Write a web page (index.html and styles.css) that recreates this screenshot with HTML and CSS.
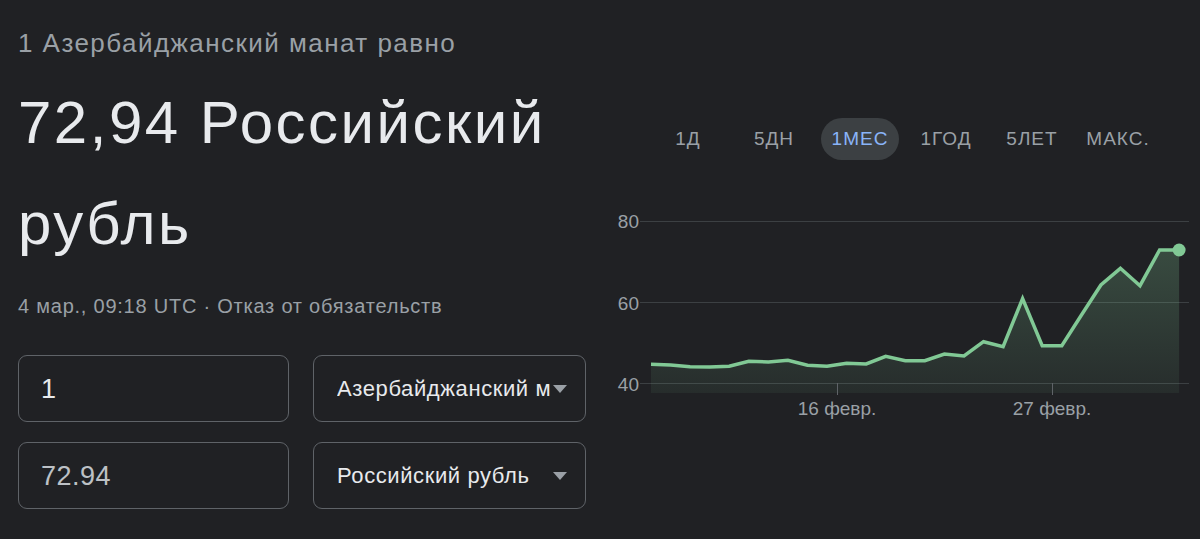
FILE: index.html
```html
<!DOCTYPE html>
<html lang="ru">
<head>
<meta charset="utf-8">
<title>Конвертер валют</title>
<link rel="stylesheet" href="styles.css">
</head>
<body>
<div class="panel">
  <section class="summary">
    <div class="subtitle">1 Азербайджанский манат равно</div>
    <div class="result">72,94 Российский рубль</div>
    <div class="meta">4 мар., 09:18 UTC · <span class="disclaimer">Отказ от обязательств</span></div>
    <div class="converter">
      <div class="field amount">1</div>
      <div class="field select"><span class="sel-text">Азербайджанский манат</span><span class="caret"></span></div>
      <div class="field amount dim">72.94</div>
      <div class="field select"><span class="sel-text">Российский рубль</span><span class="caret"></span></div>
    </div>
  </section>
  <section class="chart-area">
    <div class="tabs">
      <div class="tab">1Д</div>
      <div class="tab">5ДН</div>
      <div class="tab active">1МЕС</div>
      <div class="tab">1ГОД</div>
      <div class="tab">5ЛЕТ</div>
      <div class="tab">МАКС.</div>
    </div>
    <svg class="chart" width="614" height="270" viewBox="586 160 614 270" xmlns="http://www.w3.org/2000/svg">
      <defs>
        <linearGradient id="fillGrad" x1="0" y1="0" x2="0" y2="1">
          <stop offset="0" stop-color="#81c995" stop-opacity="0.25"/>
          <stop offset="1" stop-color="#81c995" stop-opacity="0.07"/>
        </linearGradient>
      </defs>
      <g class="grid">
        <line x1="640" y1="221.5" x2="1189" y2="221.5"/>
        <line x1="640" y1="302.5" x2="1189" y2="302.5"/>
        <line x1="640" y1="383.5" x2="1189" y2="383.5"/>
      </g>
      <g class="ylabels">
        <text x="639" y="228">80</text>
        <text x="639" y="309.5">60</text>
        <text x="639" y="390.5">40</text>
      </g>
      <polygon class="area" fill="url(#fillGrad)" points="651,393 651,364.3 670.6,365 690.1,366.7 709.7,367 729.2,366.3 748.8,361.3 768.4,362 787.9,360.3 807.5,365.3 827,366.3 846.6,363.3 866.2,364 885.7,356.3 905.3,360.7 924.8,360.7 944.4,354 964,356 983.5,341.7 1003.1,346.7 1022.6,298.5 1042.2,345.7 1061.8,345.7 1081.3,315.3 1100.9,285 1120.4,268.3 1140,285.7 1159.6,250 1179.1,250 1179.1,393"/>
      <g class="ticks">
        <line x1="837.5" y1="383" x2="837.5" y2="395"/>
        <line x1="1052.5" y1="383" x2="1052.5" y2="395"/>
      </g>
      <g class="xlabels">
        <text x="837" y="414.5">16 февр.</text>
        <text x="1052" y="414.5">27 февр.</text>
      </g>
      <polyline class="line" points="651,364.3 670.6,365 690.1,366.7 709.7,367 729.2,366.3 748.8,361.3 768.4,362 787.9,360.3 807.5,365.3 827,366.3 846.6,363.3 866.2,364 885.7,356.3 905.3,360.7 924.8,360.7 944.4,354 964,356 983.5,341.7 1003.1,346.7 1022.6,298.5 1042.2,345.7 1061.8,345.7 1081.3,315.3 1100.9,285 1120.4,268.3 1140,285.7 1159.6,250 1179.1,250"/>
      <circle class="dot" cx="1179.1" cy="250" r="6.5"/>
    </svg>
  </section>
</div>
</body>
</html>
```

FILE: styles.css
```css
html, body {
  margin: 0;
  padding: 0;
  background: #202124;
}

body {
  font-family: "Liberation Sans", Arial, sans-serif;
  color: #e8eaed;
}

.panel {
  display: flex;
  height: 539px;
  overflow: hidden;
}

.summary {
  flex: none;
  width: 568px;
  padding-left: 18px;
}

.subtitle {
  padding-top: 27px;
  font-size: 26px;
  line-height: 32px;
  letter-spacing: 1.45px;
  color: #9aa0a6;
  white-space: nowrap;
}

.result {
  margin-top: 13px;
  font-size: 60px;
  line-height: 101px;
  letter-spacing: 2.5px;
  color: #e8eaed;
}

.meta {
  margin-top: 20px;
  font-size: 20px;
  line-height: 24px;
  letter-spacing: 0.77px;
  color: #9aa0a6;
  white-space: nowrap;
}

.disclaimer {
  color: #9aa0a6;
}

.converter {
  margin-top: 37px;
  display: grid;
  grid-template-columns: 271px 273px;
  grid-auto-rows: 67px;
  column-gap: 24px;
  row-gap: 20px;
}

.field {
  box-sizing: border-box;
  border: 1px solid #5f6368;
  border-radius: 9px;
  display: flex;
  align-items: center;
}

.amount {
  padding-left: 22px;
  font-size: 27px;
  line-height: 30px;
  letter-spacing: 0.5px;
  color: #e8eaed;
}

.amount.dim {
  color: #bdc1c6;
}

.select {
  padding-left: 23px;
  padding-right: 17px;
  font-size: 22px;
  line-height: 26px;
  letter-spacing: 0.6px;
  color: #e8eaed;
}

.sel-text {
  width: 214px;
  overflow: hidden;
  white-space: nowrap;
}

.caret {
  margin-left: 2px;
  width: 0;
  height: 0;
  border-left: 7.5px solid transparent;
  border-right: 7.5px solid transparent;
  border-top: 8px solid #9aa0a6;
}

.chart-area {
  flex: 1;
  padding-top: 118px;
}

.tabs {
  display: flex;
  margin-left: 59px;
}

.tab {
  width: 78px;
  height: 42px;
  margin: 0 4px;
  border-radius: 21px;
  display: flex;
  align-items: center;
  justify-content: center;
  font-size: 19px;
  letter-spacing: 1px;
  color: #9aa0a6;
}

.tab.active {
  background: #3c4043;
  color: #8ab4f8;
}

.chart {
  display: block;
}

.grid line {
  stroke: #3c4043;
  stroke-width: 1;
}

.ticks line {
  stroke: #5f6368;
  stroke-width: 1;
}

.ylabels text {
  font-family: "Liberation Sans", Arial, sans-serif;
  font-size: 19px;
  fill: #9aa0a6;
  text-anchor: end;
}

.xlabels text {
  font-family: "Liberation Sans", Arial, sans-serif;
  font-size: 19px;
  fill: #9aa0a6;
  text-anchor: middle;
}

.line {
  fill: none;
  stroke: #81c995;
  stroke-width: 3.5;
  stroke-linejoin: miter;
}

.dot {
  fill: #81c995;
}
```
